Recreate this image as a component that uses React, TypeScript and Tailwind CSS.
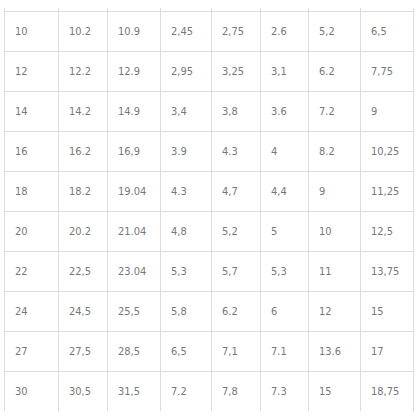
import React from 'react';

const rows: string[][] = [
  ['10', '10.2', '10.9', '2,45', '2,75', '2.6', '5,2', '6,5'],
  ['12', '12.2', '12.9', '2,95', '3,25', '3,1', '6.2', '7,75'],
  ['14', '14.2', '14.9', '3,4', '3,8', '3.6', '7.2', '9'],
  ['16', '16.2', '16,9', '3.9', '4.3', '4', '8.2', '10,25'],
  ['18', '18.2', '19.04', '4.3', '4,7', '4,4', '9', '11,25'],
  ['20', '20.2', '21.04', '4,8', '5,2', '5', '10', '12,5'],
  ['22', '22,5', '23.04', '5,3', '5,7', '5,3', '11', '13,75'],
  ['24', '24,5', '25,5', '5,8', '6.2', '6', '12', '15'],
  ['27', '27,5', '28,5', '6,5', '7,1', '7.1', '13.6', '17'],
  ['30', '30,5', '31,5', '7.2', '7,8', '7.3', '15', '18,75'],
];

const widths = [54, 49, 53, 51, 49, 48, 52, 53];

export default function App() {
  return (
    <div className="w-[418px] h-[418px] bg-white pt-2 pl-1 overflow-hidden">
      <table
        className="table-fixed border-collapse text-[11px] text-[#777] w-[410px]"
        style={{ fontFamily: '"DejaVu Sans Condensed", "DejaVu Sans", sans-serif' }}
      >
        <colgroup>
          {widths.map((w, i) => (
            <col key={i} style={{ width: w }} />
          ))}
        </colgroup>
        <tbody>
          <tr className="h-[3px]">
            {widths.map((_, i) => (
              <td key={i} className="p-0 border-x border-[#dcdcdc]" />
            ))}
          </tr>
          {rows.map((row, r) => (
            <tr key={r} className="h-10">
              {row.map((cell, c) => (
                <td
                  key={c}
                  className="px-[10px] py-0 align-middle border-x border-t border-[#dcdcdc] leading-none"
                >
                  {cell}
                </td>
              ))}
            </tr>
          ))}
        </tbody>
      </table>
    </div>
  );
}
